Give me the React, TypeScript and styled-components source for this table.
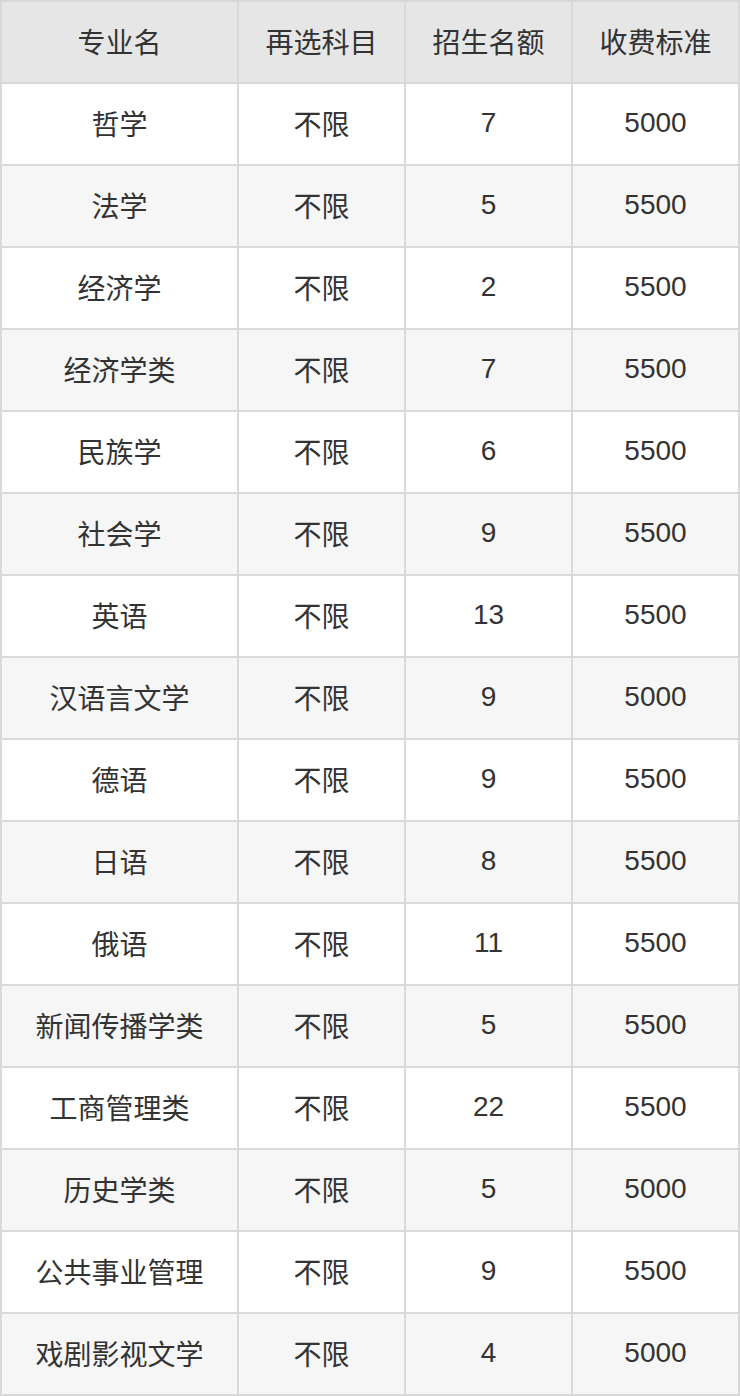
import React from "react";
import styled, { createGlobalStyle } from "styled-components";

const Global = createGlobalStyle`
  html, body { margin: 0; padding: 0; background: #ffffff; }
  body { font-family: "Liberation Sans", "Noto Sans CJK SC", sans-serif; }
`;

const Table = styled.div`
  display: grid;
  grid-template-columns: 235px 165px 165px 165px;
  grid-auto-rows: 80px;
  gap: 2px;
  padding: 2px;
  width: 740px;
  box-sizing: border-box;
  background: #d9d9d9;
`;

const Cell = styled.div<{ $bg: string }>`
  display: flex;
  align-items: center;
  justify-content: center;
  box-sizing: border-box;
  padding-bottom: 3px;
  background: ${(p) => p.$bg};
  color: #333333;
  font-size: 28px;
  font-family: "Liberation Sans", "Noto Sans CJK SC", sans-serif;
`;

const header = ["专业名", "再选科目", "招生名额", "收费标准"];

const rows: [string, string, string, string][] = [
  ["哲学", "不限", "7", "5000"],
  ["法学", "不限", "5", "5500"],
  ["经济学", "不限", "2", "5500"],
  ["经济学类", "不限", "7", "5500"],
  ["民族学", "不限", "6", "5500"],
  ["社会学", "不限", "9", "5500"],
  ["英语", "不限", "13", "5500"],
  ["汉语言文学", "不限", "9", "5000"],
  ["德语", "不限", "9", "5500"],
  ["日语", "不限", "8", "5500"],
  ["俄语", "不限", "11", "5500"],
  ["新闻传播学类", "不限", "5", "5500"],
  ["工商管理类", "不限", "22", "5500"],
  ["历史学类", "不限", "5", "5000"],
  ["公共事业管理", "不限", "9", "5500"],
  ["戏剧影视文学", "不限", "4", "5000"],
];

export default function App() {
  return (
    <>
      <Global />
      <Table>
        {header.map((h) => (
          <Cell key={h} $bg="#e6e6e6">
            {h}
          </Cell>
        ))}
        {rows.map((r, i) =>
          r.map((c, j) => (
            <Cell key={`${i}-${j}`} $bg={i % 2 === 0 ? "#ffffff" : "#f6f6f6"}>
              {c}
            </Cell>
          ))
        )}
      </Table>
    </>
  );
}
